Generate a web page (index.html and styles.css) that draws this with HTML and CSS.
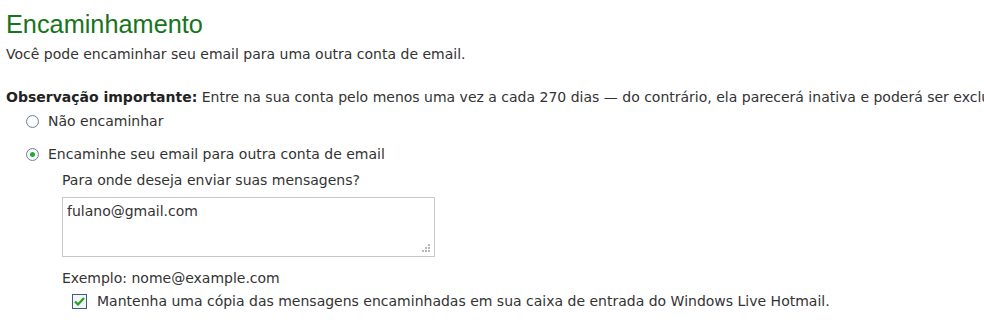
FILE: index.html
```html
<!DOCTYPE html>
<html lang="pt-BR">
<head>
    <meta charset="UTF-8">
    <title>Encaminhamento</title>
    <link rel="stylesheet" href="styles.css">
</head>
<body>
    <div class="page">
        <h1>Encaminhamento</h1>
        <p class="intro">Você pode encaminhar seu email para uma outra conta de email.</p>

        <p class="note"><b>Observação importante:</b> Entre na sua conta pelo menos uma vez a cada 270 dias — do contrário, ela parecerá inativa e poderá ser excluída.</p>

        <label class="option">
            <span class="radio"></span>
            Não encaminhar
        </label>
        <label class="option">
            <span class="radio checked"></span>
            Encaminhe seu email para outra conta de email
        </label>

        <div class="forward">
            <div class="question">Para onde deseja enviar suas mensagens?</div>
            <div class="textbox">
                fulano@gmail.com
                <svg class="grip" width="10" height="10" viewBox="0 0 10 10">
                    <rect x="7" y="1" width="2" height="2" fill="#b9b9b9"/>
                    <rect x="4" y="4" width="2" height="2" fill="#b9b9b9"/>
                    <rect x="7" y="4" width="2" height="2" fill="#b9b9b9"/>
                    <rect x="1" y="7" width="2" height="2" fill="#b9b9b9"/>
                    <rect x="4" y="7" width="2" height="2" fill="#b9b9b9"/>
                    <rect x="7" y="7" width="2" height="2" fill="#b9b9b9"/>
                </svg>
            </div>
            <div class="example">Exemplo: nome@example.com</div>
            <label class="keep">
                <span class="checkbox">
                    <svg width="11" height="9" viewBox="0 0 11 9">
                        <path d="M1 4.5 L4 7.5 L10 1" fill="none" stroke="#21a321" stroke-width="2.2"/>
                    </svg>
                </span>
                Mantenha uma cópia das mensagens encaminhadas em sua caixa de entrada do Windows Live Hotmail.
            </label>
        </div>
    </div>
</body>
</html>
```

FILE: styles.css
```css
body {
    margin: 0;
    background: #fff;
    color: #333;
    font-family: 'DejaVu Sans', Verdana, sans-serif;
    font-size: 14px;
    overflow: hidden;
}

.page {
    padding: 10px 0 0 6px;
    white-space: nowrap;
}

h1 {
    margin: 0;
    font-family: 'Liberation Sans', Arial, sans-serif;
    font-size: 25.3px;
    font-weight: normal;
    color: #18741a;
    line-height: 28px;
}

.intro {
    margin: 6px 0 0;
    line-height: 20px;
}

.note {
    margin: 23px 0 0;
    line-height: 20px;
}

.note b {
    color: #222;
}

.option {
    display: flex;
    align-items: center;
    gap: 9px;
    margin-left: 20px;
    line-height: 20px;
    height: 20px;
}

.option + .option {
    margin-top: 13px;
}

.note + .option {
    margin-top: 4px;
}

.radio {
    width: 11px;
    height: 11px;
    border: 1.5px solid #6a85a2;
    border-radius: 50%;
    background: radial-gradient(circle, #fff 40%, #e6e8ea 100%);
    display: flex;
    align-items: center;
    justify-content: center;
}

.radio.checked::after {
    content: "";
    width: 5px;
    height: 5px;
    border-radius: 50%;
    background: #22a83a;
}

.forward {
    margin-left: 56px;
}

.question {
    margin-top: 6px;
    line-height: 20px;
}

.textbox {
    position: relative;
    margin-top: 7px;
    width: 363px;
    height: 52px;
    border: 1px solid #c9c9c9;
    padding: 3px 4px;
    line-height: 20px;
}

.grip {
    position: absolute;
    right: 3px;
    bottom: 3px;
}

.example {
    margin-top: 11px;
    line-height: 20px;
}

.keep {
    display: flex;
    align-items: center;
    gap: 10px;
    margin: 3px 0 0 10px;
    line-height: 20px;
}

.checkbox {
    width: 13px;
    height: 13px;
    border: 1px solid #3c5f86;
    background: #f3f5f7;
    display: flex;
    align-items: center;
    justify-content: center;
}
```
